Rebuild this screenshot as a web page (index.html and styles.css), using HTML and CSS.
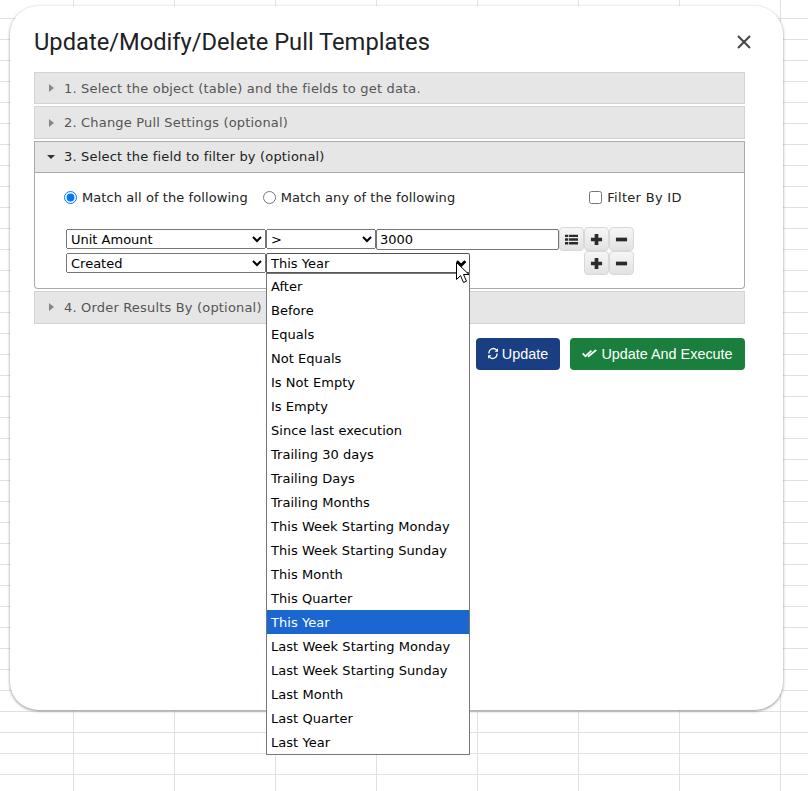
FILE: index.html
```html
<!DOCTYPE html>
<html lang="en">
<head>
    <meta charset="UTF-8">
    <title>Update/Modify/Delete Pull Templates</title>
    <link rel="stylesheet" href="styles.css">
</head>
<body>
    <div class="dialog">
        <div class="dialog-header">
            <div class="dialog-title">Update/Modify/Delete Pull Templates</div>
            <svg class="close-icon" viewBox="0 0 14 14"><path d="M1 1 13 13M13 1 1 13"/></svg>
        </div>

        <div class="section-header">
            <span class="arrow-right"></span>1. Select the object (table) and the fields to get data.
        </div>
        <div class="section-header">
            <span class="arrow-right"></span>2. Change Pull Settings (optional)
        </div>
        <div class="section-header active">
            <span class="arrow-down"></span>3. Select the field to filter by (optional)
        </div>

        <!-- Filter panel -->
        <div class="section-panel">
            <div class="match-row">
                <label class="match-all"><input type="radio" name="match" checked>Match all of the following</label>
                <label class="match-any"><input type="radio" name="match">Match any of the following</label>
                <label class="filter-id"><input type="checkbox">Filter By ID</label>
            </div>

            <div class="filter-grid">
                <select class="field-select"><option>Unit Amount</option></select>
                <select class="op-select"><option>&gt;</option></select>
                <input class="value-input" type="text" value="3000">
                <button class="icon-btn">
                    <svg viewBox="0 0 16 14"><path d="M0 1h4v3H0zM5 1h11v3H5zM0 5.500h4v3H0zM5 5.500h11v3H5zM0 10h4v3H0zM5 10h11v3H5z"/></svg>
                </button>
                <button class="icon-btn">
                    <svg viewBox="0 0 14 14"><path d="M5 1h4v4h4v4H9v4H5V9H1V5h4z"/></svg>
                </button>
                <button class="icon-btn">
                    <svg viewBox="0 0 14 14"><path d="M1 5h12v4H1z"/></svg>
                </button>

                <select class="field-select"><option>Created</option></select>
                <div class="date-cell">
                    <select class="date-select"><option>This Year</option></select>
                    <svg class="date-arrow" viewBox="0 0 10 7"><path d="M1 1.500 5 5.500 9 1.500"/></svg>
                    <div class="date-popup">
                        <div class="date-option">After</div>
                        <div class="date-option">Before</div>
                        <div class="date-option">Equals</div>
                        <div class="date-option">Not Equals</div>
                        <div class="date-option">Is Not Empty</div>
                        <div class="date-option">Is Empty</div>
                        <div class="date-option">Since last execution</div>
                        <div class="date-option">Trailing 30 days</div>
                        <div class="date-option">Trailing Days</div>
                        <div class="date-option">Trailing Months</div>
                        <div class="date-option">This Week Starting Monday</div>
                        <div class="date-option">This Week Starting Sunday</div>
                        <div class="date-option">This Month</div>
                        <div class="date-option">This Quarter</div>
                        <div class="date-option selected">This Year</div>
                        <div class="date-option">Last Week Starting Monday</div>
                        <div class="date-option">Last Week Starting Sunday</div>
                        <div class="date-option">Last Month</div>
                        <div class="date-option">Last Quarter</div>
                        <div class="date-option">Last Year</div>
                    </div>
                    <svg class="cursor" viewBox="0 0 13 21"><path d="M.5.500v17l4-4 3 7 3-1.300-3-6.700h5.500z"/></svg>
                </div>
                <button class="icon-btn add-btn">
                    <svg viewBox="0 0 14 14"><path d="M5 1h4v4h4v4H9v4H5V9H1V5h4z"/></svg>
                </button>
                <button class="icon-btn">
                    <svg viewBox="0 0 14 14"><path d="M1 5h12v4H1z"/></svg>
                </button>
            </div>
        </div>

        <div class="section-header">
            <span class="arrow-right"></span>4. Order Results By (optional)
        </div>

        <div class="actions">
            <button class="action-btn update-btn">
                <svg class="refresh-icon" viewBox="0 0 12 14"><path d="M9.500 3.200A4.400 4.400 0 0 0 2 7H.4a6 6 0 0 1 10.200-4.900L12 .8V5H8zM2.500 10.800A4.400 4.400 0 0 0 10 7h1.600a6 6 0 0 1-10.200 4.900L0 13.200V9h4z"/></svg>Update
            </button>
            <button class="action-btn execute-btn">
                <svg class="check-icon" viewBox="0 0 15 9"><path d="M0 5l1.300-1.200L3.500 6 8.800 1 10 2.200 3.500 8.400zM5.500 7l7.800-6.500L15 1.500 6.500 8.500z"/></svg>Update And Execute
            </button>
        </div>
    </div>
</body>
</html>
```
FILE: styles.css
```css
html, body {
    height: 100%;
}
body {
    margin: 0;
    overflow: hidden;
    background-color: #fff;
    background-image:
        linear-gradient(to right, #e1e1e1 1px, transparent 1px),
        linear-gradient(to bottom, #e1e1e1 1px, transparent 1px);
    background-size: 101px 21px;
    background-position: 73px 18px;
    font-family: "DejaVu Sans", Verdana, sans-serif;
    font-size: 13px;
    color: #222;
}
.dialog {
    box-sizing: border-box;
    width: 773px;
    height: 704px;
    margin: 6px 0 0 10px;
    padding: 0 38px 0 24px;
    background: #fff;
    border-radius: 28px;
    box-shadow: 0 1px 3px rgba(0, 0, 0, 0.45);
}
.dialog-header {
    display: flex;
    align-items: center;
    justify-content: space-between;
    box-sizing: border-box;
    height: 66px;
    margin-right: -6px;
    margin-bottom: -2px;
    padding-top: 6px;
}
.dialog-title {
    font-family: Roboto, sans-serif;
    font-size: 23.7px;
    color: #202124;
}
.close-icon {
    width: 14px;
    height: 14px;
    fill: none;
    stroke: #444;
    stroke-width: 2;
}
.section-header {
    display: flex;
    align-items: center;
    box-sizing: border-box;
    height: 32.4px;
    margin-top: 2px;
    padding-left: 14px;
    border: 1px solid #d3d3d3;
    background: #e6e6e6;
    color: #555;
    letter-spacing: 0.18px;
}
.section-header.active {
    border-color: #aaa;
    color: #222;
}
.arrow-right {
    width: 0;
    height: 0;
    margin-right: 10px;
    border-left: 5px solid #888;
    border-top: 4px solid transparent;
    border-bottom: 4px solid transparent;
}
.arrow-down {
    width: 0;
    height: 0;
    margin-right: 9px;
    margin-left: -2px;
    border-top: 4px solid #333;
    border-left: 4px solid transparent;
    border-right: 4px solid transparent;
}
.section-panel {
    box-sizing: border-box;
    height: 116px;
    padding: 15px 0 0 29px;
    border: 1px solid #aaa;
    border-top: none;
    border-radius: 0 0 4px 4px;
}
.match-row {
    display: flex;
    align-items: center;
    height: 18px;
    letter-spacing: 0.08px;
}
.match-row label {
    display: flex;
    align-items: center;
}
.match-row input {
    width: 13px;
    height: 13px;
    margin: 0 5px 0 0;
}
.match-any {
    margin-left: 15px;
}
.filter-id {
    margin-left: 134px;
    letter-spacing: 0.3px;
}
.filter-grid {
    display: grid;
    grid-template-columns: 200px 110px 183px 25px 25px 26px;
    grid-auto-rows: 24px;
    margin: 21px 0 0 2px;
    align-items: center;
}
select, .value-input {
    box-sizing: border-box;
    font-family: inherit;
    font-size: 13px;
    color: #000;
}
.field-select, .op-select {
    width: 100%;
    height: 20px;
}
.value-input {
    width: 100%;
    height: 21px;
    padding: 1px 3px;
    border: 1px solid #767676;
    border-radius: 2px;
}
.date-cell {
    position: relative;
    grid-column: 2 / 4;
    height: 20px;
}
.date-select {
    width: 204px;
    height: 21px;
    border: 1px solid #555;
    border-bottom-width: 2px;
    border-radius: 2px;
    background-color: #fff;
}
.date-arrow {
    position: absolute;
    top: 7px;
    left: 190px;
    width: 11px;
    height: 7px;
    fill: none;
    stroke: #000;
    stroke-width: 2;
}
.date-popup {
    position: absolute;
    top: 20px;
    left: 0;
    z-index: 10;
    box-sizing: border-box;
    width: 204px;
    border: 1px solid #767676;
    background: #fff;
    color: #000;
}
.date-option {
    height: 24px;
    padding-left: 4px;
    line-height: 26px;
    letter-spacing: 0.04px;
}
.date-option.selected {
    background: #1a67d2;
    color: #fff;
}
.cursor {
    position: absolute;
    top: 9px;
    left: 190px;
    z-index: 20;
    width: 13px;
    height: 21px;
    fill: #fff;
    stroke: #000;
}
.icon-btn {
    display: flex;
    align-items: center;
    justify-content: center;
    box-sizing: border-box;
    width: 25px;
    height: 24px;
    padding: 0;
    border: 1px solid #d8d8d8;
    border-radius: 4px;
    background: linear-gradient(#f6f6f6, #e2e2e2);
}
.icon-btn svg {
    width: 13px;
    height: 13px;
    fill: #2b2b2b;
}
.add-btn {
    grid-column-start: 5;
}
.actions {
    display: flex;
    justify-content: flex-end;
    gap: 10px;
    margin-top: 14px;
}
.action-btn {
    display: flex;
    align-items: center;
    justify-content: center;
    height: 32px;
    padding: 0;
    border: none;
    border-radius: 4px;
    font-family: "Liberation Sans", Arial, sans-serif;
    font-size: 14.4px;
    color: #fff;
}
.update-btn {
    width: 84px;
    background: #1a3e82;
}
.execute-btn {
    width: 175px;
    background: #1a7f3c;
}
.refresh-icon {
    width: 10px;
    height: 13px;
    margin-right: 4px;
    fill: #fff;
}
.check-icon {
    width: 15px;
    height: 9px;
    margin-right: 4px;
    fill: #fff;
}
```
